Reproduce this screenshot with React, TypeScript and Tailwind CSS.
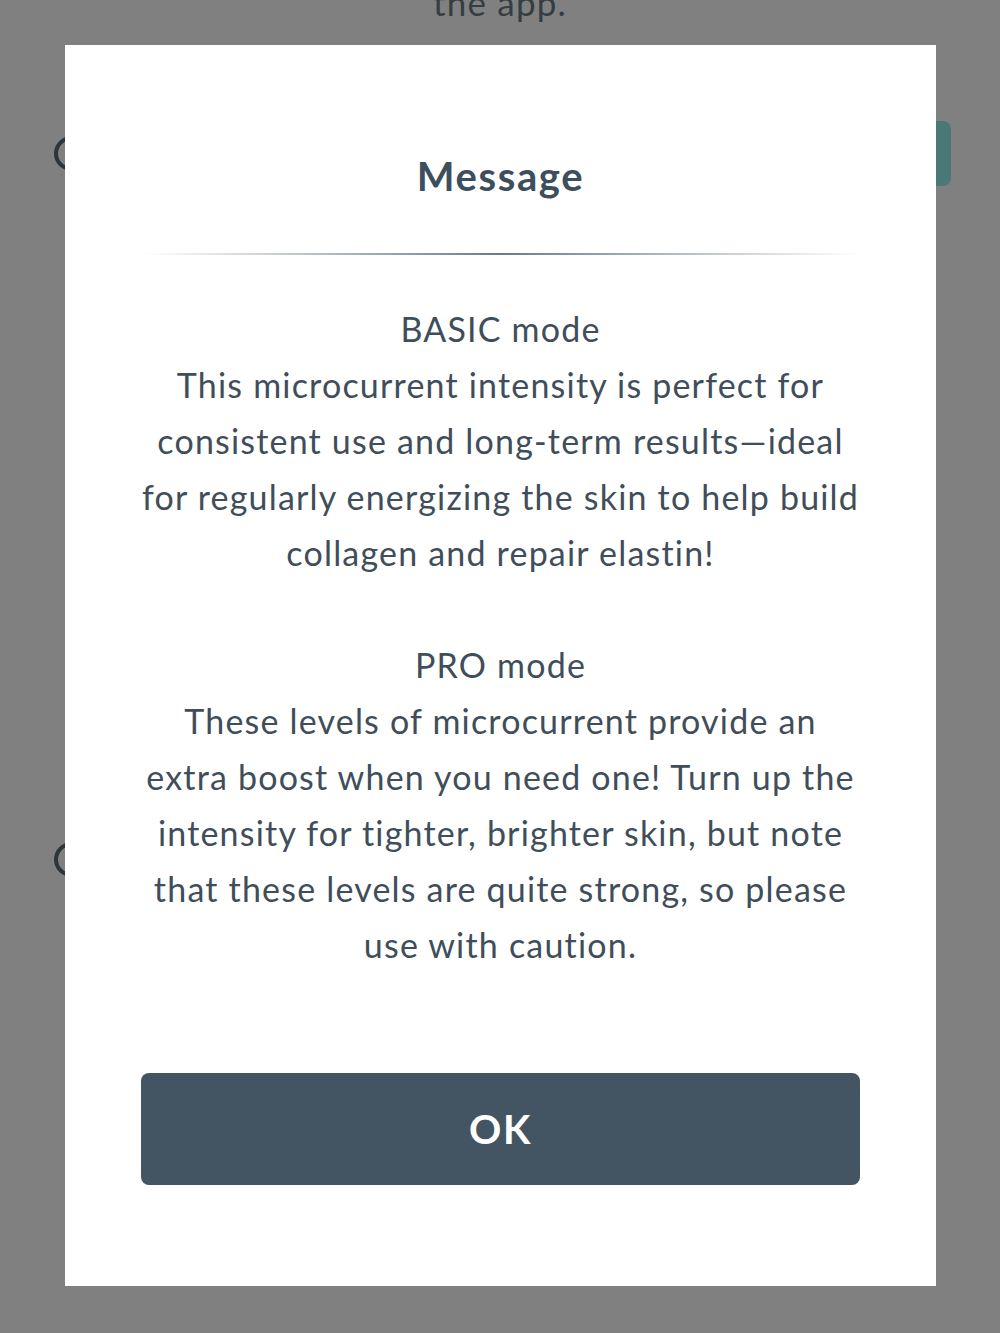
const BASIC_LINES = [
  "This microcurrent intensity is perfect for",
  "consistent use and long-term results\u2014ideal",
  "for regularly energizing the skin to help build",
  "collagen and repair elastin!",
]

const PRO_LINES = [
  "These levels of microcurrent provide an",
  "extra boost when you need one! Turn up the",
  "intensity for tighter, brighter skin, but note",
  "that these levels are quite strong, so please",
  "use with caution.",
]

function Paragraph({ title, lines }: { title: string; lines: string[] }) {
  return (
    <div className="flex flex-col items-center">
      <p className="whitespace-nowrap">{title}</p>
      {lines.map((l) => (
        <p key={l} className="whitespace-nowrap">
          {l}
        </p>
      ))}
    </div>
  )
}

export default function App() {
  return (
    <div
      className="relative h-[1333px] w-[1000px] overflow-hidden bg-[#808080]"
      style={{ fontFamily: "Lato, 'Noto Sans', sans-serif" }}
    >
      {/* page behind the overlay */}
      <div className="flex flex-col">
        <p className="-mt-[18px] text-center text-[35px] leading-[40px] tracking-[0.035em] text-[#343d44]">
          the app.
        </p>
        <div className="mt-[99px] flex items-center justify-between pl-[54px] pr-[49px]">
          <div className="h-[35px] w-[35px] rounded-full border-[4px] border-[#2b353c]" />
          <div className="h-[65px] w-[120px] rounded-[8px] bg-[#4a7876]" />
        </div>
        <div className="mt-[656px] pl-[54px]">
          <div className="h-[35px] w-[35px] rounded-full border-[4px] border-[#2b353c]" />
        </div>
      </div>

      {/* dialog */}
      <div className="absolute left-[65px] top-[45px] flex h-[1241px] w-[871px] flex-col items-center bg-white">
        <h2 className="mt-[108px] text-[40px] font-bold leading-[46px] tracking-[0.04em] text-[#3d4e5c]">
          Message
        </h2>
        <div className="mt-[54px] h-[2px] w-[716px] bg-gradient-to-r from-transparent via-[#6b7c85] to-transparent" />
        <div className="mt-[46px] flex flex-col items-center gap-[56px] text-[34px] leading-[56px] tracking-[0.035em] text-[#3f4e5a]">
          <Paragraph title="BASIC mode" lines={BASIC_LINES} />
          <Paragraph title="PRO mode" lines={PRO_LINES} />
        </div>
        <button className="mt-[100px] flex h-[112px] w-[719px] items-center justify-center rounded-[8px] bg-[#435563] text-[40px] font-bold tracking-[0.04em] text-white">
          OK
        </button>
      </div>
    </div>
  )
}
